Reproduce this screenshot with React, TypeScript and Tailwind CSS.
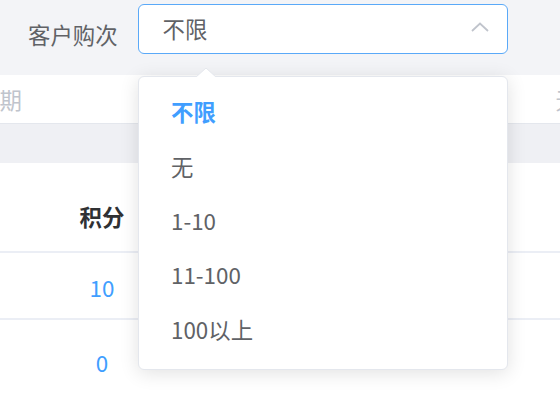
import React from "react";

const items = ["不限", "无", "1-10", "11-100", "100以上"];

export default function App() {
  return (
    <div
      className="relative w-[560px] h-[399px] overflow-hidden bg-[#f3f4f7] text-[#606266]"
      style={{ fontFamily: '"Noto Sans CJK SC", "Noto Sans", sans-serif' }}
    >
      {/* filter bar */}
      <div className="h-[75px] flex items-start">
        <div className="pl-[28px] pr-[20px] pt-[20px] text-[22.4px] leading-[28px] whitespace-nowrap">
          客户购次
        </div>
        <div className="mt-[4px] w-[370px] h-[50px] bg-white border-[1.5px] border-[#5aa9f8] rounded-[6px] flex items-center justify-between pl-[24px] pr-[18px]">
          <span className="text-[22.4px] leading-[28px] -mt-[2px]">不限</span>
          <svg width="18" height="10" viewBox="0 0 18 10" className="-mt-[4px]">
            <polyline points="1,9 9,1.5 17,9" fill="none" stroke="#c0c4cc" strokeWidth="1.8" />
          </svg>
        </div>
      </div>

      {/* date row */}
      <div className="h-[49px] bg-white border-b border-[#e4e7ed] flex items-center justify-between">
        <span className="-ml-[23px] text-[22.4px] leading-[28px] text-[#c0c4cc] whitespace-nowrap">日期</span>
        <span className="-mr-[18px] text-[22.4px] leading-[28px] text-[#c0c4cc] whitespace-nowrap">无</span>
      </div>

      {/* gap band */}
      <div className="h-[39px] bg-[#eff0f4]" />

      {/* table */}
      <div className="bg-white">
        <div className="h-[90px] border-b-2 border-[#ebeef5] flex items-end pb-[21px]">
          <div className="w-[204px] flex justify-center text-[22.4px] leading-[28px] font-bold text-[#303133]">积分</div>
        </div>
        <div className="h-[67px] border-b-2 border-[#ebeef5] flex items-center pt-[2px]">
          <div className="w-[204px] flex justify-center text-[22.4px] leading-[28px] text-[#409eff]">10</div>
        </div>
        <div className="h-[90px] flex items-start pt-[28px]">
          <div className="w-[204px] flex justify-center text-[22.4px] leading-[28px] text-[#409eff]">0</div>
        </div>
      </div>

      {/* dropdown */}
      <div className="absolute left-[138px] top-[76px] w-[370px] h-[294px] bg-white border border-[#e4e7ed] rounded-[6px] shadow-[0_3px_19px_rgba(0,0,0,0.12)] pt-[7px]">
        <svg width="22" height="10" viewBox="0 0 22 10" className="absolute left-[56px] -top-[9px]">
          <polygon points="0,10 11,0 22,10" fill="#ffffff" stroke="#e4e7ed" strokeWidth="1" />
          <rect x="0" y="9" width="22" height="2" fill="#ffffff" />
        </svg>
        {items.map((t, i) => (
          <div
            key={t}
            className={
              i === 0
                ? "h-[54.4px] px-[32px] flex items-center text-[22.4px] leading-[28px] font-bold text-[#409eff]"
                : "h-[54.4px] px-[32px] flex items-center text-[22.4px] leading-[28px] text-[#606266]"
            }
          >
            {t}
          </div>
        ))}
      </div>
    </div>
  );
}
